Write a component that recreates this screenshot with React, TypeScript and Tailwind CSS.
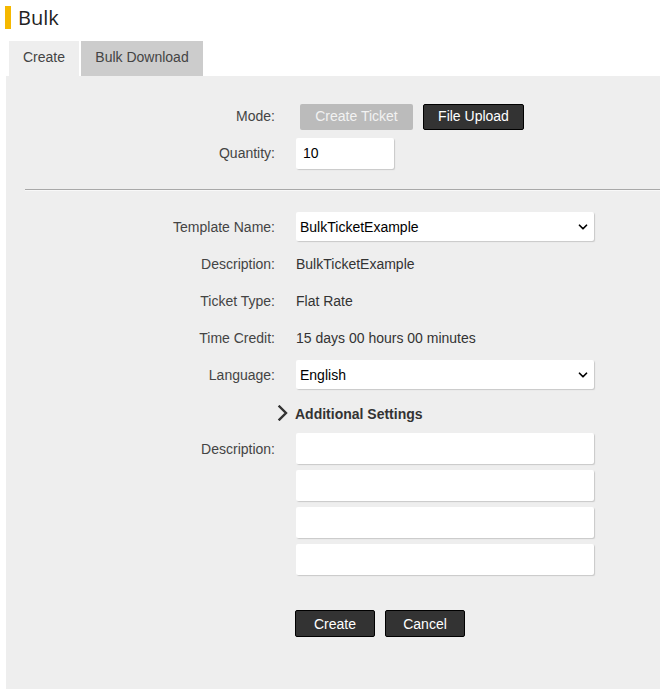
import { ChevronDown } from 'lucide-react';

const font = { fontFamily: '"Liberation Sans", Arial, sans-serif' };

function Row({ label, children, nudge = false }: { label: string; children?: React.ReactNode; nudge?: boolean }) {
  return (
    <div className="flex h-[37px] items-center">
      <div className={`w-[269px] text-right text-[14px] text-[#444] ${nudge ? 'pt-[2px]' : ''}`}>{label}</div>
      <div className="ml-[21px] flex items-center">{children}</div>
    </div>
  );
}

function Select({ value }: { value: string }) {
  return (
    <div className="flex h-[29px] w-[298px] items-center justify-between rounded-[2px] bg-white pl-[4px] pr-[4px] text-[14px] text-black shadow-[1px_1px_1px_#c8c8c8]">
      <span className="pt-[2px]">{value}</span>
      <ChevronDown className="h-[14px] w-[14px] text-black" strokeWidth={3} />
    </div>
  );
}

function TextBox() {
  return <div className="h-[31px] w-[298px] rounded-[2px] bg-white shadow-[1px_1px_1px_#c8c8c8]" />;
}

export default function App() {
  return (
    <div className="min-h-[694px] w-[660px] bg-white" style={font}>
      {/* 标题 */}
      <div className="flex items-center pl-[5px] pt-[6px]">
        <div className="h-[23px] w-[6px] bg-[#f5b800]" />
        <h1 className="ml-[7px] text-[20px] leading-[23px] text-[#222]" style={{ fontFamily: '"Open Sans", sans-serif' }}>
          Bulk
        </h1>
      </div>

      {/* 标签页 */}
      <div className="mt-[12px] flex pl-[9px]">
        <div className="flex h-[35px] w-[70px] items-center justify-center bg-[#eeeeee] pb-[2px] text-[14px] text-[#444]">Create</div>
        <div className="ml-[2px] flex h-[35px] w-[122px] items-center justify-center bg-[#cccccc] pb-[2px] text-[14px] text-[#444]">
          Bulk Download
        </div>
      </div>

      <div className="ml-[6px] bg-[#eeeeee] pb-[52px] pt-[22px]">
        <Row label="Mode:">
          <div className="ml-[4px] flex gap-[10px]">
            <button className="h-[26px] w-[113px] rounded-[2px] bg-[#bbbbbb] text-[14px] text-[#f2f2f2]">Create Ticket</button>
            <button className="h-[26px] w-[101px] rounded-[2px] border border-black bg-[#333333] text-[14px] text-white">
              File Upload
            </button>
          </div>
        </Row>
        <Row label="Quantity:">
          <div className="flex h-[31px] w-[98px] items-center rounded-[2px] bg-white pl-[7px] text-[14px] text-black shadow-[1px_1px_1px_#c8c8c8]">
            10
          </div>
        </Row>

        <div className="ml-[19px] mt-[17px] h-[2px] border-t border-[#a8a8a8] bg-[#f8f8f8]" />

        <div className="mt-[17px]">
          <Row label="Template Name:" nudge>
            <Select value="BulkTicketExample" />
          </Row>
          <Row label="Description:" nudge>
            <span className="pt-[2px] text-[14px] text-[#333]">BulkTicketExample</span>
          </Row>
          <Row label="Ticket Type:" nudge>
            <span className="pt-[2px] text-[14px] text-[#333]">Flat Rate</span>
          </Row>
          <Row label="Time Credit:" nudge>
            <span className="pt-[2px] text-[14px] text-[#333]">15 days 00 hours 00 minutes</span>
          </Row>
          <Row label="Language:" nudge>
            <Select value="English" />
          </Row>

          <div className="flex h-[40px] items-center pl-[271px]">
            <svg width="12" height="16" viewBox="0 0 12 16" fill="none">
              <path d="M2.5 1.5 L9 8 L2.5 14.5" stroke="#333" strokeWidth="2.4" strokeLinecap="square" />
            </svg>
            <span className="ml-[6px] pt-[2px] text-[14px] font-bold text-[#333]">Additional Settings</span>
          </div>

          <div className="flex">
            <div className="flex h-[31px] w-[269px] items-center justify-end pt-[2px] text-[14px] text-[#444]">Description:</div>
            <div className="ml-[21px] flex flex-col gap-[6px]">
              <TextBox />
              <TextBox />
              <TextBox />
              <TextBox />
            </div>
          </div>

          <div className="mt-[35px] flex gap-[10px] pl-[289px]">
            <button className="h-[27px] w-[80px] rounded-[2px] border border-black bg-[#333333] pt-[1px] text-[14px] text-white">Create</button>
            <button className="h-[27px] w-[80px] rounded-[2px] border border-black bg-[#333333] pt-[1px] text-[14px] text-white">Cancel</button>
          </div>
        </div>
      </div>
    </div>
  );
}
